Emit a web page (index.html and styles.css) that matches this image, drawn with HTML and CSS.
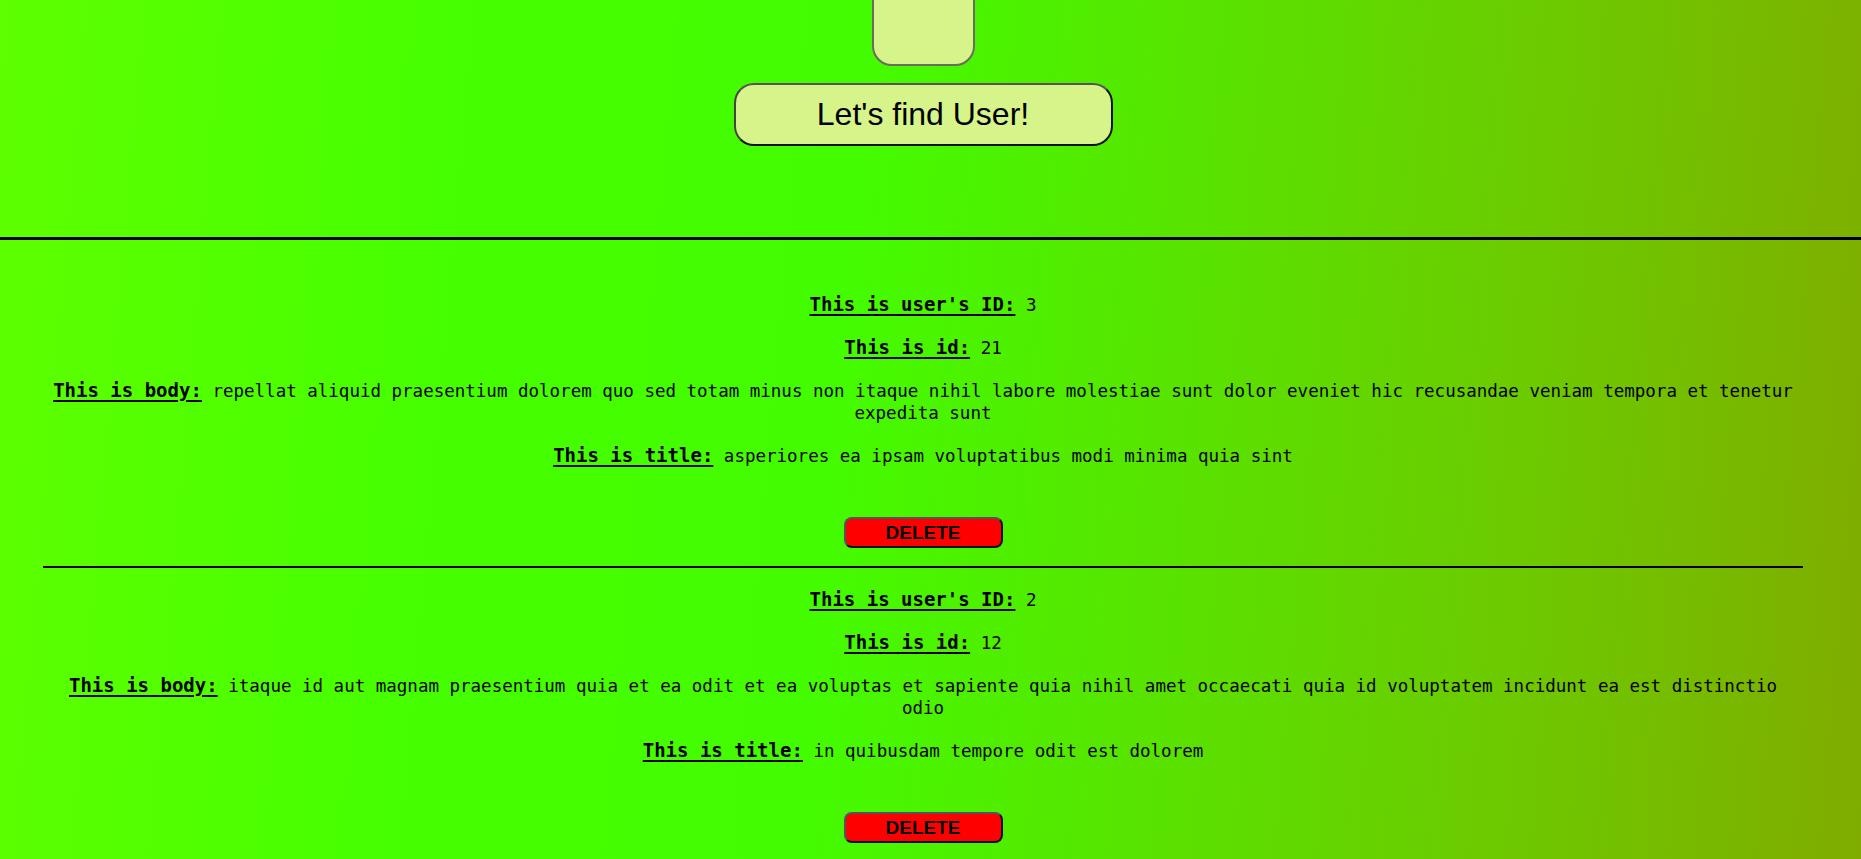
FILE: index.html
```html
<!DOCTYPE html>
<html lang="en">
<head>
<meta charset="utf-8">
<title>Find User</title>
<link rel="stylesheet" href="styles.css">
</head>
<body>
<div class="page">
  <header class="top">
    <div class="input-box"></div>
    <button class="find-btn">Let's find User!</button>
  </header>
  <div class="divider"></div>
  <main class="list">
    <article class="post">
      <p class="row"><span class="label">This is user's ID:</span> 3</p>
      <p class="row"><span class="label">This is id:</span> 21</p>
      <p class="row"><span class="label">This is body:</span> repellat aliquid praesentium dolorem quo sed totam minus non itaque nihil labore molestiae sunt dolor eveniet hic recusandae veniam tempora et tenetur expedita sunt</p>
      <p class="row"><span class="label">This is title:</span> asperiores ea ipsam voluptatibus modi minima quia sint</p>
      <button class="delete-btn">DELETE</button>
    </article>
    <article class="post">
      <p class="row"><span class="label">This is user's ID:</span> 2</p>
      <p class="row"><span class="label">This is id:</span> 12</p>
      <p class="row"><span class="label">This is body:</span> itaque id aut magnam praesentium quia et ea odit et ea voluptas et sapiente quia nihil amet occaecati quia id voluptatem incidunt ea est distinctio odio</p>
      <p class="row"><span class="label">This is title:</span> in quibusdam tempore odit est dolorem</p>
      <button class="delete-btn">DELETE</button>
    </article>
    <article class="post">
      <p class="row"><span class="label">This is user's ID:</span> 1</p>
      <p class="row"><span class="label">This is id:</span> 5</p>
      <p class="row"><span class="label">This is body:</span> repudiandae veniam quaerat sunt sed alias aut fugiat sit autem sed est voluptatem omnis possimus esse voluptatibus quis est aut tenetur dolor neque</p>
      <p class="row"><span class="label">This is title:</span> nesciunt quas odio</p>
      <button class="delete-btn">DELETE</button>
    </article>
  </main>
</div>
</body>
</html>
```

FILE: styles.css
```css
html, body {
  margin: 0;
  padding: 0;
}

body {
  background: linear-gradient(95deg, #5eff00 0%, #45ff00 25%, #44fc00 45%, #6ccb00 80%, #80ac00 100%);
  background-attachment: fixed;
  min-height: 100vh;
  font-family: "DejaVu Sans Mono", "Liberation Mono", monospace;
  color: #000;
  overflow-x: hidden;
}

.page {
  width: 1846px;
}

.top {
  display: flex;
  flex-direction: column;
  align-items: center;
  height: 237px;
  box-sizing: border-box;
}

.input-box {
  width: 103px;
  height: 86px;
  margin-top: -20px;
  box-sizing: border-box;
  background: #d6f48a;
  border: 2px solid #6b6b5e;
  border-radius: 20px;
}

.find-btn {
  margin-top: 17px;
  width: 379px;
  height: 63px;
  box-sizing: border-box;
  background: #d6f48a;
  border: 2px solid #111;
  border-top-color: #555;
  border-left-color: #444;
  border-radius: 20px;
  font-family: "Liberation Sans", Arial, sans-serif;
  font-size: 32px;
  color: #000;
  padding: 0;
}

.divider {
  height: 3px;
  background: #000;
  width: 1861px;
}

.list {
  padding: 33px 43px 0;
}

.post {
  display: flex;
  flex-direction: column;
  align-items: center;
  border-bottom: 2px solid #000;
  text-align: center;
}

.row {
  margin: 20px 0 0;
  font-size: 17.5px;
  line-height: 22px;
  align-self: stretch;
}

.label {
  font-weight: bold;
  font-size: 19px;
  text-decoration: underline;
  text-decoration-thickness: 2px;
  text-underline-offset: 3px;
}

.delete-btn {
  margin: 50px 0 18px;
  width: 159px;
  height: 31px;
  box-sizing: border-box;
  background: #ff0000;
  border: 2px solid #111;
  border-top-color: #555;
  border-left-color: #555;
  border-radius: 8px;
  font-family: "Liberation Sans", Arial, sans-serif;
  font-weight: bold;
  font-size: 19px;
  color: #000;
  padding: 0;
}
```
